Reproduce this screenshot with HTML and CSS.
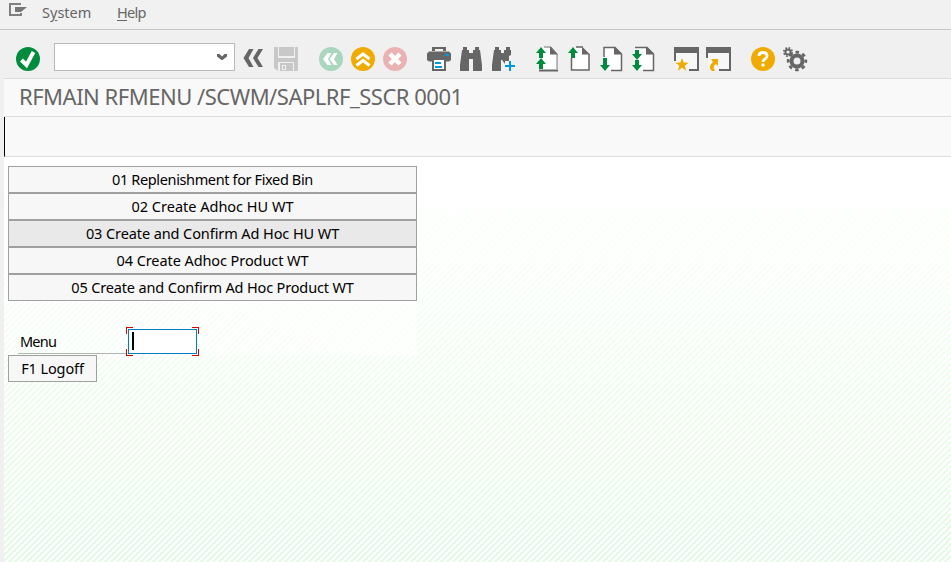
FILE: index.html
```html
<!DOCTYPE html>
<html lang="en">
<head>
<meta charset="utf-8">
<title>RFMAIN RFMENU</title>
<link rel="stylesheet" href="styles.css">
</head>
<body>
<div class="window">
  <nav class="menubar">
    <svg class="sysicon" width="18" height="13" viewBox="0 0 18 13"><path d="M12 1H1v11h11V10" fill="none" stroke="#808080" stroke-width="2"/><path d="M6 4h12l-6 5H6z" fill="#777"/></svg>
    <span class="menu system">S<u>y</u>stem</span>
    <span class="menu help"><u>H</u>elp</span>
  </nav>
  <div class="main">
    <div class="toolbar">
      <svg class="ok" width="24" height="24" viewBox="0 0 24 24"><circle cx="12" cy="12" r="12" fill="#008c3c"/><path d="M5.500 13l5 5L17.500 5" fill="none" stroke="#fff" stroke-width="4"/></svg>
      <div class="command"><svg width="10" height="7" viewBox="0 0 10 7"><path d="M0 0h2.500L5 2.500 7.500 0H10v2.500L5.500 6h-1L0 2.500z" fill="#666"/></svg></div>
      <svg class="icons" width="580" height="26" viewBox="240 46 580 26">
        <path fill="#666" d="M249 49h4.500l-5 9 5 9H249l-5.500-9zM258.500 49h4.500l-5.500 9 5.500 9h-4.500l-5.500-9z"/>
        <path fill="#c8c8c8" d="M274 47h4v11h17V47h3v24h-20l-4-3zM279 47h15v9h-15z"/>
        <path fill="#f0f0f0" d="M278 62h16v9h-16z"/><path fill="#c8c8c8" d="M280 63h13v8h-13z"/><path fill="#f0f0f0" d="M282 65h4v5h-4z"/><path fill="#c8c8c8" d="M283 66h2v3h-2z"/>
        <circle cx="331" cy="59" r="12" fill="#a9d6bd"/><path fill="#fff" d="M327.500 53h4l-3.500 6 3.500 6h-4l-4.500-6zM334 53h3.500l-3.500 6 3.500 6H334l-4.500-6z"/>
        <circle cx="363" cy="59" r="12" fill="#f0ab00"/><path fill="none" stroke="#fff" stroke-width="3" d="M356.500 59l6.500-5 6.500 5M356.500 65.500l6.500-5 6.500 5"/>
        <circle cx="395" cy="59" r="12" fill="#ebb2b2"/><path d="M390 54l10 10m0-10l-10 10" stroke="#fff" stroke-width="4.500"/>
        <path d="M432 47h14v4h-3v-2h-8v2h-3zM429 51.500h20l2 2V60l-2 1.500h-20l-2-1.500v-6.500z" fill="#666"/><path fill="#0098df" d="M445 54h4v2h-4z"/><path fill="#fff" d="M434 60h10v9h-10z"/><path d="M433 60v10h12V60" fill="none" stroke="#666" stroke-width="2"/><path d="M435 63h6M435 67h7" stroke="#0098df" stroke-width="2"/>
        <path fill="#666" d="M463 47h4v3h2v3h4v-3h2v-3h4v3h1l2 15v6h-9v-12h-4v12h-9v-6l2-15h1z"/>
        <path fill="#666" d="M495 47h4v3h2v3h3v-3h2v-3h4v3h1v5l-2 1v5h-4v3l-3-4h-1v11h-9v-6l2-15h1z"/>
        <path d="M505 66h10M510 61v10" stroke="#0098df" stroke-width="2"/>
        <path fill="#fff" d="M539 48h12l6 6v16h-18zM571 48h12l6 6v16h-18zM603 48h12l6 6v16h-18zM635 48h12l6 6v16h-18z"/>
        <path d="M544 47h7l6 7v15" fill="none" stroke="#777"/><path d="M550 46.500l8 8h-8z" fill="#666"/><path d="M539 70.500h19" stroke="#666" stroke-width="2"/>
        <path d="M571.500 58v12H589V54M576 47h7" fill="none" stroke="#666" stroke-width="1.500"/><path d="M582 46.500l8 8h-8z" fill="#666"/>
        <path d="M604 57V47.500h11l6.500 6.500v16.500H611" fill="none" stroke="#666" stroke-width="1.500"/><path d="M614 46.500l8 8h-8z" fill="#666"/>
        <path d="M635 47.500h12l6.500 6.500v16.500H643" fill="none" stroke="#666" stroke-width="1.500"/><path d="M646 46.500l8 8h-8z" fill="#666"/>
        <path fill="#008c3c" d="M541 47l5 6h-3v5h-4v-5h-3zM541 58l5 6h-3v5h-4v-5h-3zM573 47l5 6h-3v5h-4v-5h-3zM605 71l5-6h-3v-7h-4v7h-3zM637 60l5-6h-3v-4h-4v4h-3zM637 71l5-6h-3v-5h-4v5h-3z"/>
        <path fill="#666" d="M674 47h25v24h-10v-2h8V53h-21v8h-2zM706 47h25v24h-12v-2h10V53h-21v5h-2z"/>
        <path fill="#f7f7f7" d="M676 53h21v16h-21zM708 53h21v16h-21z"/>
        <path fill="#f0ab00" d="M682 58l1.700 4.600 5 .2-4 3 1.500 5-4.200-3-4.200 3 1.500-5-4-3 5-.2zM711 59h7v7l-2-2q-4 2-1 7h-3q-5-4 1-9z"/>
        <circle cx="763" cy="59" r="12" fill="#f0ab00"/>
        <path d="M759 56q0-3.500 4-3.500t4 3.500q0 2-2 3t-2 3" fill="none" stroke="#fff" stroke-width="2.800"/><path fill="#fff" d="M761.500 63.500h3v3h-3z"/>
        <g fill="none" stroke="#666"><circle cx="797" cy="61" r="5.500" stroke-width="4"/><circle cx="797" cy="61" r="8.800" stroke-width="2.800" stroke-dasharray="3.500 3.411" stroke-dashoffset="1.750"/><circle cx="788" cy="52" r="2.600" stroke-width="2"/><circle cx="788" cy="52" r="4.200" stroke-width="1.600" stroke-dasharray="1.800 1.500"/></g>
      </svg>
    </div>
    <header class="title">RFMAIN RFMENU /SCWM/SAPLRF_SSCR 0001</header>
    <div class="appbar"></div>
    <main class="content">
      <section class="screen">
        <button class="b1">01 Replenishment for Fixed Bin</button>
        <button class="b2">02 Create Adhoc HU WT</button>
        <button class="b3 active">03 Create and Confirm Ad Hoc HU WT</button>
        <button class="b4">04 Create Adhoc Product WT</button>
        <button class="b5">05 Create and Confirm Ad Hoc Product WT</button>
        <div class="field"><label>Menu</label><div class="focus"><div class="input"><i class="caret"></i></div></div></div>
      </section>
      <button class="logoff">F1 Logoff</button>
    </main>
  </div>
</div>
</body>
</html>
```
FILE: styles.css
```css
* { box-sizing: border-box; }
body { margin: 0; background: #f0f0f0; font: 14.5px "Noto Sans", sans-serif; color: #000; }
.window { width: 951px; height: 562px; overflow: hidden; display: flex; flex-direction: column; }
.menubar { height: 30px; flex: none; border-bottom: 1px solid #c4c8c4; display: flex; color: #666; background: #f1f1f1; }
.sysicon { margin: 3px 0 0 9px; }
.menu { line-height: 20px; margin-top: 2px; white-space: nowrap; }
.menu u { text-underline-offset: 2px; }
.system { margin-left: 15px; width: 75px; }
.help { letter-spacing: -.7px; }
.main { margin-left: 4px; flex: 1; display: flex; flex-direction: column; }
.toolbar { height: 49px; flex: none; border-bottom: 1px solid #dcdcdc; display: flex; padding-left: 12px; }
.ok { margin-top: 17px; flex: none; }
.command { width: 181px; height: 28px; flex: none; margin: 13px 0 0 14px; border: 1px solid #bababa; background: #fff; display: flex; justify-content: flex-end; align-items: center; padding-right: 7px; }
.icons { margin: 16px 0 0 5px; flex: none; }
.title { height: 38px; flex: none; background: #f9f9f9; border-bottom: 1px solid #dcdcdc; padding-left: 15px; font-size: 22px; line-height: 34px; letter-spacing: -.49px; color: #666; white-space: nowrap; }
.appbar { height: 40px; flex: none; background: #f9f9f9; border-bottom: 1px solid #dcdcdc; border-left: 1px solid #000; }
.content { flex: 1; padding: 9px 0 0 4px; background: linear-gradient(#fff 0%, rgba(255,255,255,.85) 25%, rgba(255,255,255,0) 100%), repeating-linear-gradient(135deg, #e3fae3 0 2.121px, #fff 2.121px 4.243px); }
.screen { width: 409px; height: 189px; display: flex; flex-direction: column; background: linear-gradient(90deg, rgba(255,255,255,.2), rgba(255,255,255,.7)); }
button { display: block; height: 27px; flex: none; padding: 0; border: 1px solid #a0a0a0; background: #f7f7f7; font: inherit; line-height: 25px; white-space: nowrap; text-align: center; color: #000; }
.b1 { letter-spacing: -.37px; }
.b3 { letter-spacing: -.09px; }
.b4 { letter-spacing: -.08px; }
.b5 { letter-spacing: -.15px; }
.active { background: #e9e9e9; }
.field { display: flex; height: 27px; margin: 27px 0 0 10px; width: 182px; }
.field label { width: 108px; height: 26px; line-height: 26px; padding-left: 2px; letter-spacing: -.8px; border-bottom: 1px solid #b0b6b0; }
.focus { width: 73px; height: 29px; margin-top: -1px; flex: none; padding: 2px; background: linear-gradient(#d00,#d00) 0 0/7px 1px, linear-gradient(#d00,#d00) 0 0/1px 7px, linear-gradient(#d00,#d00) 100% 0/7px 1px, linear-gradient(#d00,#d00) 100% 0/1px 7px, linear-gradient(#d00,#d00) 0 100%/7px 1px, linear-gradient(#d00,#d00) 0 100%/1px 7px, linear-gradient(#d00,#d00) 100% 100%/7px 1px, linear-gradient(#d00,#d00) 100% 100%/1px 7px; background-repeat: no-repeat; }
.input { height: 25px; border: 1px solid #007cc0; background: #fff; padding: 2px 0 0 3px; }
.caret { display: block; width: 2px; height: 18px; background: #000; }
.logoff { width: 89px; letter-spacing: -.1px; }
```
